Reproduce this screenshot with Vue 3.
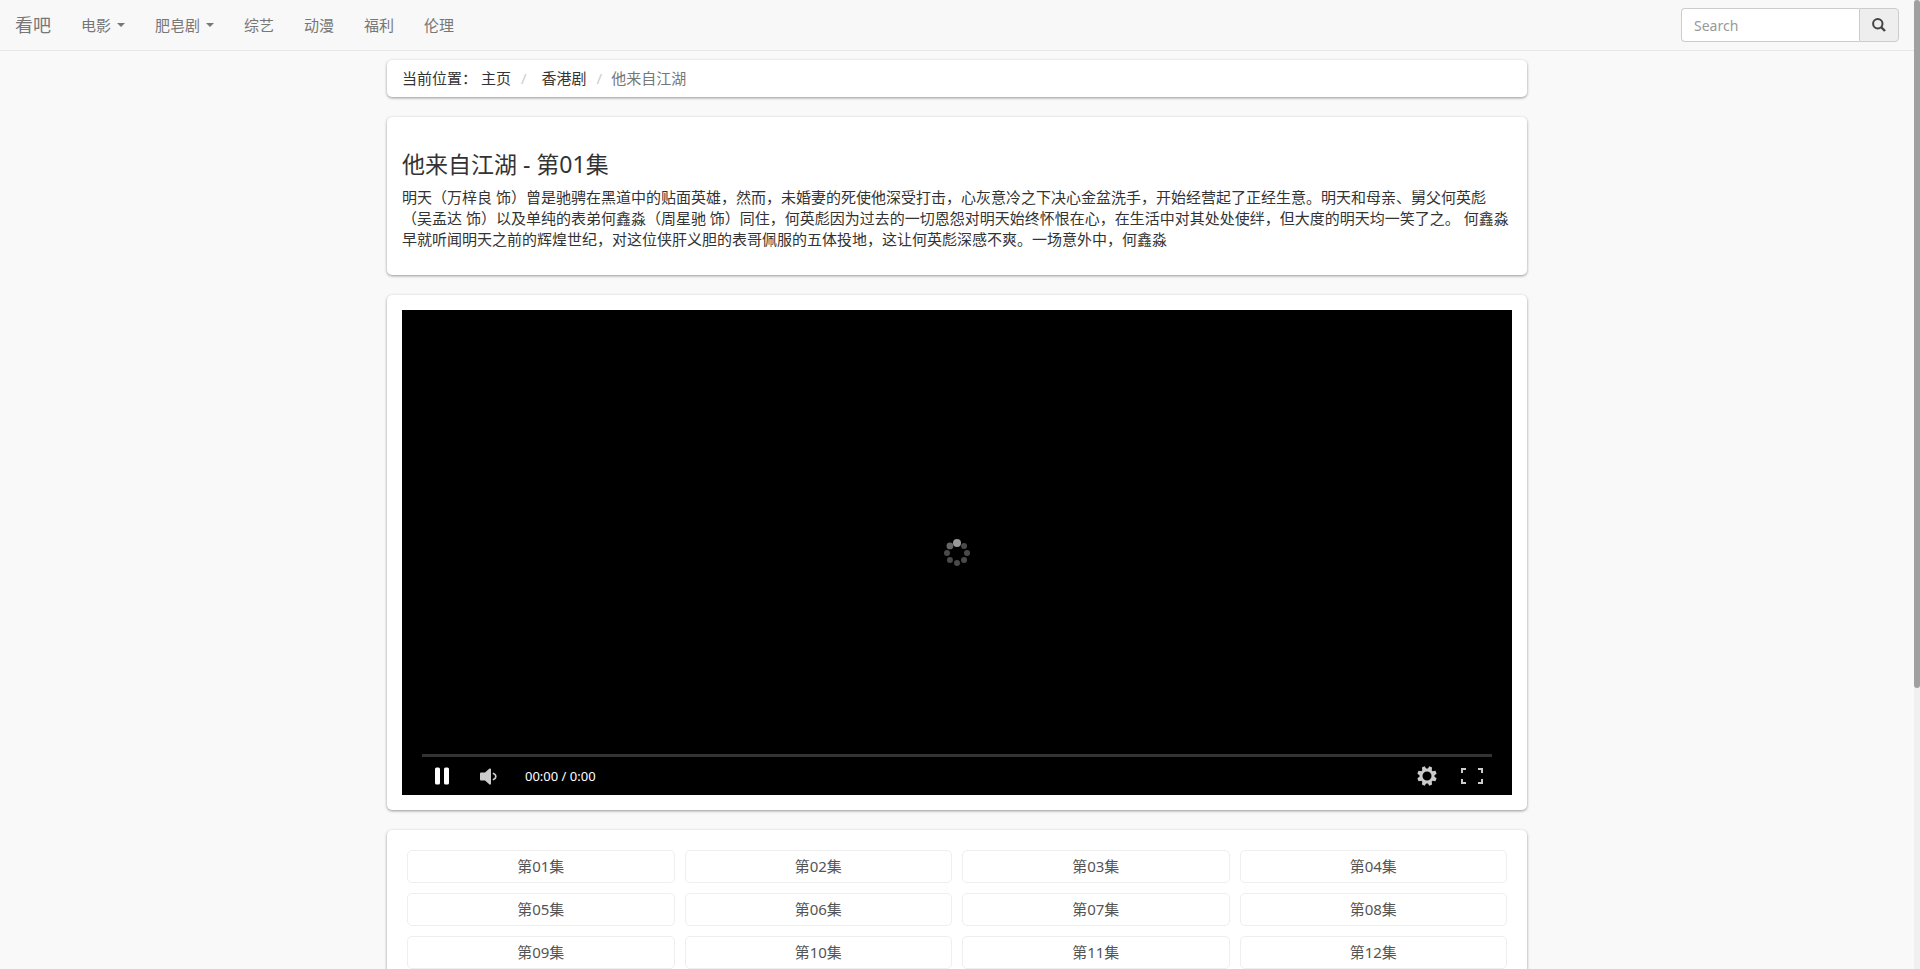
<script setup>
const links = [
  { label: '电影', menu: true },
  { label: '肥皂剧', menu: true },
  { label: '综艺' },
  { label: '动漫' },
  { label: '福利' },
  { label: '伦理' },
]

const episodes = Array.from({ length: 12 }, (_, i) => `第${String(i + 1).padStart(2, '0')}集`)

const dots = Array.from({ length: 8 }, (_, i) => {
  const angle = (i * Math.PI) / 4
  return {
    x: 14 + 10 * Math.sin(angle),
    y: 14 - 10 * Math.cos(angle),
    r: i === 0 ? 4 : i === 7 ? 3.4 : 3,
    fill: i === 0 ? '#999' : i === 7 ? '#666' : '#4a4a4a',
  }
})
const teeth = [22.5, 67.5, 112.5, 157.5, 202.5, 247.5, 292.5, 337.5]
</script>

<template>
  <div class="shell">
    <div class="page">
      <nav class="navbar">
        <a class="brand" href="#">看吧</a>
        <ul class="menu">
          <li v-for="link in links" :key="link.label">
            <a href="#">{{ link.label }}<span v-if="link.menu" class="caret"></span></a>
          </li>
        </ul>
        <form class="search" @submit.prevent>
          <input type="text" placeholder="Search" aria-label="Search" />
          <button type="submit" aria-label="搜索">
            <svg width="14" height="14" viewBox="0 0 14 14">
              <circle cx="5.8" cy="5.8" r="4.7" fill="none" stroke="#444" stroke-width="2" />
              <path d="M9 9l4 4" stroke="#444" stroke-width="2.4" />
            </svg>
          </button>
        </form>
      </nav>

      <main class="container">
        <ol class="card crumbs">
          <li>当前位置： <a href="#">主页</a></li>
          <li class="wide"><a href="#">香港剧</a></li>
          <li class="current">他来自江湖</li>
        </ol>

        <section class="card intro">
          <h3>他来自江湖 - 第01集</h3>
          <p>明天（万梓良 饰）曾是驰骋在黑道中的贴面英雄，然而，未婚妻的死使他深受打击，心灰意冷之下决心金盆洗手，开始经营起了正经生意。明天和母亲、舅父何英彪（吴孟达 饰）以及单纯的表弟何鑫淼（周星驰 饰）同住，何英彪因为过去的一切恩怨对明天始终怀恨在心，在生活中对其处处使绊，但大度的明天均一笑了之。 何鑫淼早就听闻明天之前的辉煌世纪，对这位侠肝义胆的表哥佩服的五体投地，这让何英彪深感不爽。一场意外中，何鑫淼</p>
        </section>

        <section class="card">
          <div class="player">
            <div class="screen">
              <svg width="28" height="28" viewBox="0 0 28 28">
                <circle v-for="(d, i) in dots" :key="i" :cx="d.x" :cy="d.y" :r="d.r" :fill="d.fill" />
              </svg>
            </div>
            <div class="track"></div>
            <div class="controls">
              <button type="button" aria-label="暂停">
                <svg width="14" height="18" viewBox="0 0 14 18" fill="#fff">
                  <rect x="0" y="0.5" width="5" height="17" rx="1.5" />
                  <rect x="9" y="0.5" width="5" height="17" rx="1.5" />
                </svg>
              </button>
              <button type="button" class="volume" aria-label="音量">
                <svg width="17" height="17" viewBox="0 0 17 17">
                  <path d="M1 4.5H5L9.5 .5Q11 0 11 1.5V15.5Q11 17 9.5 16.5L5 12.5H1Q0 12.5 0 11.5V5.5Q0 4.5 1 4.5Z" fill="#ccc" />
                  <path d="M12.8 5.2Q15.8 6.2 15.8 8.5T12.8 11.8" fill="none" stroke="#ccc" stroke-width="1.6" />
                </svg>
              </button>
              <span class="time">00:00 / 0:00</span>
              <button type="button" class="settings" aria-label="设置">
                <svg width="20" height="20" viewBox="-10 -10 20 20">
                  <circle r="6" fill="none" stroke="#ccc" stroke-width="3" />
                  <path v-for="t in teeth" :key="t" :transform="`rotate(${t})`" d="M-2.2 -6.8L-1.5 -9.8H1.5L2.2 -6.8Z" fill="#ccc" />
                </svg>
              </button>
              <button type="button" class="fullscreen" aria-label="全屏">
                <svg width="22" height="16" viewBox="0 0 22 16" fill="none" stroke="#ccc" stroke-width="2">
                  <path d="M1 5V1H5M17 1H21V5M21 11V15H17M5 15H1V11" />
                </svg>
              </button>
            </div>
          </div>
        </section>

        <section class="card episodes">
          <a v-for="name in episodes" :key="name" href="#">{{ name }}</a>
        </section>
      </main>
    </div>
    <div class="scrollbar"><div class="thumb"></div></div>
  </div>
</template>

<style>
body {
  margin: 0;
  background: #f9f9f9;
}
</style>

<style scoped>
.shell {
  display: flex;
  height: 100vh;
  overflow: hidden;
  color: #333;
  font: 15px/21px "Noto Sans", "Noto Sans CJK SC", sans-serif;
  text-spacing-trim: space-all;
}
.shell *,
.shell *::before {
  box-sizing: border-box;
}
.page {
  flex: 1;
  min-width: 0;
}
a {
  color: inherit;
  text-decoration: none;
}
.navbar {
  display: flex;
  align-items: center;
  height: 51px;
  padding-right: 15px;
  background: #f8f8f8;
  border-bottom: 1px solid #e7e7e7;
  color: #777;
}
.brand {
  padding: 0 15px;
  font-size: 18px;
}
.menu {
  display: flex;
  margin: 0;
  padding: 0;
  list-style: none;
}
.menu a {
  display: flex;
  align-items: center;
  padding: 0 15px;
}
.caret {
  margin-left: 6px;
  border: 4px solid transparent;
  border-top-color: currentColor;
  border-bottom: 0;
}
.search {
  display: flex;
  width: 218px;
  height: 34px;
  margin-left: auto;
}
.search input {
  flex: 1;
  min-width: 0;
  padding: 0 12px;
  border: 1px solid #ccc;
  border-right: 0;
  border-radius: 4px 0 0 4px;
  background: #fff;
  color: #555;
  font: inherit;
  font-size: 14px;
}
.search input::placeholder {
  color: #999;
}
.search button {
  display: flex;
  align-items: center;
  justify-content: center;
  width: 40px;
  padding: 0;
  border: 1px solid #ccc;
  border-radius: 0 4px 4px 0;
  background: #eee;
}
.container {
  display: flex;
  flex-direction: column;
  gap: 20px;
  max-width: 1140px;
  margin: 9px auto 0;
}
.card {
  padding: 15px;
  border-radius: 5px;
  background: #fff;
  box-shadow: 0 1px 3px rgba(0, 0, 0, 0.4);
}
.crumbs {
  display: flex;
  margin: 0;
  padding: 8px 15px;
  list-style: none;
}
.crumbs li + li::before {
  content: "/";
  padding: 0 9px 0 10px;
  color: #ccc;
}
.crumbs li.wide::before {
  padding-right: 15px;
}
.crumbs .current {
  color: #777;
}
.intro h3 {
  margin: 20px 0 10px;
  font-size: 23px;
  font-weight: 400;
  line-height: 25px;
}
.intro p {
  margin: 0 0 10px;
}
.player {
  position: relative;
  display: flex;
  flex-direction: column;
  justify-content: flex-end;
  height: 485px;
  background: #000;
}
.screen {
  position: absolute;
  inset: 0;
  display: flex;
  align-items: center;
  justify-content: center;
}
.track {
  height: 3px;
  margin: 0 20px;
  background: #333;
}
.controls {
  position: relative;
  display: flex;
  align-items: center;
  height: 38px;
  padding: 0 29px 0 33px;
}
.controls button {
  display: flex;
  padding: 0;
  border: 0;
  background: none;
}
.controls .volume {
  margin-left: 31px;
}
.time {
  margin-left: 28px;
  color: #fff;
  font-size: 13px;
}
.controls .settings {
  margin-left: auto;
}
.controls .fullscreen {
  margin-left: 24px;
}
.episodes {
  display: grid;
  grid-template-columns: repeat(4, 1fr);
  gap: 10px;
  padding: 20px;
  color: #555;
}
.episodes a {
  padding: 5px;
  border: 1px solid #eee;
  border-radius: 5px;
  text-align: center;
}
.scrollbar {
  width: 6px;
  background: #f0f0f0;
}
.thumb {
  height: 71%;
  border-radius: 3px;
  background: #a0a0a0;
}
</style>
